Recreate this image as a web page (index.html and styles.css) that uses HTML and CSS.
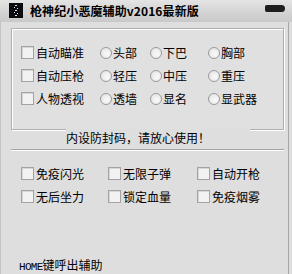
FILE: index.html
```html
<!DOCTYPE html>
<html lang="zh-CN">
<head>
    <meta charset="UTF-8">
    <title>枪神纪小恶魔辅助v2016最新版</title>
    <link rel="stylesheet" href="styles.css">
</head>
<body>
    <div class="window">
        <div class="titlebar">
            <svg class="app-icon" width="14" height="15" viewBox="0 0 14 15">
                <rect width="14" height="15" fill="#0c0c10"/>
                <g fill="#e8e8f0">
                    <rect x="6" y="2" width="2" height="1"/>
                    <rect x="5" y="4" width="1" height="1"/>
                    <rect x="8" y="5" width="1" height="1"/>
                    <rect x="6" y="7" width="2" height="1"/>
                    <rect x="5" y="9" width="1" height="1"/>
                    <rect x="8" y="10" width="1" height="1"/>
                    <rect x="6" y="12" width="2" height="1"/>
                </g>
            </svg>
            <span class="title">枪神纪小恶魔辅助v2016最新版</span>
            <span class="close-btn"></span>
        </div>

        <div class="client">
            <div class="group">
                <div class="grid-row">
                    <label class="check"><span class="box"></span>自动瞄准</label>
                    <label class="radio"><span class="dot"></span>头部</label>
                    <label class="radio"><span class="dot"></span>下巴</label>
                    <label class="radio"><span class="dot"></span>胸部</label>
                </div>
                <div class="grid-row">
                    <label class="check"><span class="box"></span>自动压枪</label>
                    <label class="radio"><span class="dot"></span>轻压</label>
                    <label class="radio"><span class="dot"></span>中压</label>
                    <label class="radio"><span class="dot"></span>重压</label>
                </div>
                <div class="grid-row">
                    <label class="check"><span class="box"></span>人物透视</label>
                    <label class="radio"><span class="dot"></span>透墙</label>
                    <label class="radio"><span class="dot"></span>显名</label>
                    <label class="radio"><span class="dot"></span>显武器</label>
                </div>
            </div>
            <div class="notice">内设防封码，请放心使用！</div>
            <div class="separator"></div>

            <div class="options">
                <label class="check"><span class="box"></span>免疫闪光</label>
                <label class="check"><span class="box"></span>无限子弹</label>
                <label class="check"><span class="box"></span>自动开枪</label>
                <label class="check"><span class="box"></span>无后坐力</label>
                <label class="check"><span class="box"></span>锁定血量</label>
                <label class="check"><span class="box"></span>免疫烟雾</label>
            </div>

            <div class="hotkey"><span class="key">HOME</span>键呼出辅助</div>
        </div>
        <div class="bottom-bar"></div>
    </div>
</body>
</html>
```

FILE: styles.css
```css
body {
    margin: 0;
    padding: 0;
    font-family: "Noto Sans CJK SC", "Liberation Sans", sans-serif;
    font-size: 12px;
    color: #000;
    background: #dedede;
}
.window {
    width: 292px;
    height: 274px;
    display: flex;
    flex-direction: column;
    background: #dedede;
    box-shadow: inset 1px 0 0 #c4c4c4;
}
.titlebar {
    height: 22px;
    flex: none;
    display: flex;
    align-items: center;
    padding-left: 9px;
    background: linear-gradient(#e4e4e4, #d2d2d2 60%, #c9c9c9);
}
.app-icon {
    display: block;
    margin-top: -2px;
}
.title {
    margin-left: 7px;
    font-weight: bold;
    font-size: 12px;
    letter-spacing: 0.1px;
    line-height: 16px;
}
.close-btn {
    width: 20px;
    height: 7px;
    margin-left: auto;
    margin-right: 7px;
    margin-top: -5px;
    border-radius: 2px 4px 4px 2px;
    background: #1e1e1e;
}
.client {
    flex: 1;
    padding: 6px 0 0 11px;
    margin-right: 4px;
    box-shadow: 1px 0 0 #a8a8a8;
    display: flex;
    flex-direction: column;
}
.group {
    width: 262px;
    height: 88px;
    padding: 12px 0 0 9px;
    border: 1px solid #b0b0b0;
    box-shadow: 1px 1px 0 #fff, inset 1px 1px 0 #fff;
    background: #e0e0e0;
}
.grid-row {
    display: grid;
    grid-template-columns: 79px 50px 58px auto;
    height: 23px;
    align-items: center;
}
.check, .radio {
    display: flex;
    align-items: center;
    white-space: nowrap;
    line-height: 16px;
}
.box {
    width: 11px;
    height: 11px;
    margin-right: 2px;
    border: 1px solid #a3a3a3;
    background: #f2f2f2;
    box-shadow: inset 1px 1px 0 #d6d6d6;
}
.dot {
    width: 10px;
    height: 10px;
    margin-right: 1px;
    border: 1px solid #9a9a9a;
    border-radius: 50%;
    background: radial-gradient(circle at 60% 60%, #fafafa, #e0e0e0);
}
.notice {
    width: 184px;
    height: 18px;
    line-height: 18px;
    margin: -1px 0 0 55px;
    background: #dedede;
    position: relative;
}
.separator {
    width: 273px;
    margin-top: 2px;
    border-top: 1px solid #a4a4a4;
    border-bottom: 1px solid #fff;
}
.options {
    display: grid;
    grid-template-columns: 87px 89px auto;
    grid-auto-rows: 23px;
    align-items: center;
    margin-top: 11px;
    padding-left: 10px;
}
.hotkey {
    margin-top: 49px;
    padding-left: 8px;
    line-height: 16px;
}
.key {
    font-family: "Liberation Mono", monospace;
    font-size: 11px;
    letter-spacing: -0.7px;
}
.bottom-bar {
    height: 4px;
    flex: none;
    background: #262626;
}
```
